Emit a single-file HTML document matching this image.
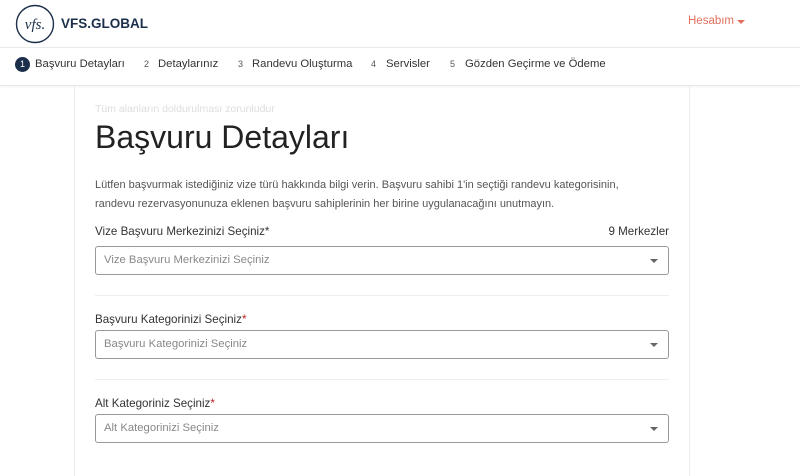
<!DOCTYPE html>
<html><head><meta charset="utf-8"><style>
*{margin:0;padding:0;box-sizing:border-box}
body{width:800px;height:463px;overflow:hidden;background:#fff;font-family:"Liberation Sans",sans-serif;position:relative;color:#333}
.a{position:absolute;white-space:nowrap}
.hdr{position:absolute;left:0;top:0;width:800px;height:48px;border-bottom:1px solid #ececec}
.nav{position:absolute;left:0;top:48px;width:800px;height:38px;border-bottom:1px solid #e8e8e8;box-shadow:0 1px 3px rgba(0,0,0,.05)}
.num{position:absolute;width:15px;height:15px;border-radius:50%;font-size:9px;text-align:center;line-height:15px;color:#555}
.nt{position:absolute;top:57px;line-height:15px;font-size:11.3px;color:#333;white-space:nowrap}
.card{position:absolute;left:74px;top:86px;width:616px;height:390px;border-left:1px solid #ececec;border-right:1px solid #ececec}
.inp{position:absolute;left:95px;width:574px;height:29px;border:1px solid #999;border-radius:3px;font-size:11.3px;color:#888;padding:0 8px;line-height:27px}
.inp:after{content:"";position:absolute;right:10px;top:12px;border-left:4px solid transparent;border-right:4px solid transparent;border-top:4px solid #666}
.lbl{font-size:11.6px;color:#333}
.sep{position:absolute;left:95px;width:574px;height:1px;background:#eee}
</style></head><body>
<div class="hdr"></div>
<svg class="a" style="left:15px;top:4px" width="40" height="40"><circle cx="20" cy="20" r="18.5" fill="none" stroke="#1b2f4a" stroke-width="1.4"/><text x="20" y="25" text-anchor="middle" font-family="Liberation Serif" font-style="italic" font-size="15" fill="#1b2f4a">vfs.</text></svg>
<div class="a" style="left:61px;top:16px;font-size:13.5px;font-weight:bold;color:#1b2f4a">VFS.GLOBAL</div>
<div class="a" style="left:688px;top:15px;font-size:11.5px;color:#e0705c">Hesabım</div>
<div class="a" style="left:737px;top:20px;border-left:4px solid transparent;border-right:4px solid transparent;border-top:4px solid #e0705c"></div>
<div class="nav"></div>
<div class="num" style="left:15px;top:57px;background:#1b2f4a;color:#fff">1</div>
<div class="nt" style="left:35px">Başvuru Detayları</div>
<div class="num" style="left:139px;top:57px">2</div>
<div class="nt" style="left:158px">Detaylarınız</div>
<div class="num" style="left:233px;top:57px">3</div>
<div class="nt" style="left:252px">Randevu Oluşturma</div>
<div class="num" style="left:366px;top:57px">4</div>
<div class="nt" style="left:386px">Servisler</div>
<div class="num" style="left:445px;top:57px">5</div>
<div class="nt" style="left:465px">Gözden Geçirme ve Ödeme</div>
<div class="card"></div>
<div class="a" style="left:95px;top:103px;font-size:10.5px;color:#ddd">Tüm alanların doldurulması zorunludur</div>
<div class="a" style="left:95px;top:119px;font-size:32px;color:#222">Başvuru Detayları</div>
<div class="a" style="left:95px;top:176px;font-size:11px;color:#555;line-height:19px">Lütfen başvurmak istediğiniz vize türü hakkında bilgi verin. Başvuru sahibi 1'in seçtiği randevu kategorisinin,<br>randevu rezervasyonunuza eklenen başvuru sahiplerinin her birine uygulanacağını unutmayın.</div>
<div class="a lbl" style="left:95px;top:225px">Vize Başvuru Merkezinizi Seçiniz*</div>
<div class="a lbl" style="right:131px;top:225px">9 Merkezler</div>
<div class="inp" style="top:246px">Vize Başvuru Merkezinizi Seçiniz</div>
<div class="sep" style="top:295px"></div>
<div class="a lbl" style="left:95px;top:313px">Başvuru Kategorinizi Seçiniz<span style="color:#b22">*</span></div>
<div class="inp" style="top:330px">Başvuru Kategorinizi Seçiniz</div>
<div class="sep" style="top:379px"></div>
<div class="a lbl" style="left:95px;top:397px">Alt Kategoriniz Seçiniz<span style="color:#b22">*</span></div>
<div class="inp" style="top:414px">Alt Kategorinizi Seçiniz</div>
</body></html>
